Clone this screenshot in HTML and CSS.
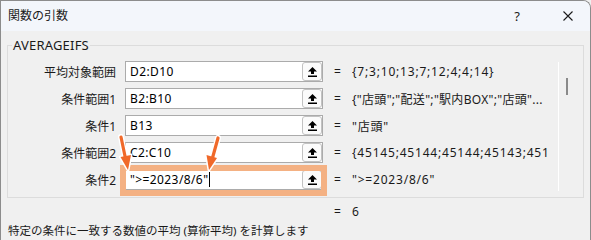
FILE: index.html
```html
<!DOCTYPE html>
<html lang="ja">
<head>
<meta charset="utf-8">
<title>関数の引数</title>
<link rel="stylesheet" href="styles.css">
</head>
<body>
<div class="win">
  <div class="titlebar">
    <span class="title">関数の引数</span>
    <span class="help">?</span>
    <span class="close"><svg width="10" height="10" viewBox="0 0 10 10"><path d="M0.5 0.5 L9.5 9.5 M9.5 0.5 L0.5 9.5" stroke="#1a1a1a" stroke-width="1.1" fill="none"/></svg></span>
  </div>
  <div class="content">
    <fieldset class="group">
      <legend>AVERAGEIFS</legend>
      <div class="rows-wrap">
        <div class="rows">
          <div class="row">
            <span class="lbl">平均対象範囲</span>
            <span class="ref"><span class="txt">D2:D10</span><span class="btn"><svg width="9" height="10" viewBox="0 0 9 10"><path d="M4.5 0 L9 4.5 L6 4.5 L6 7 L3 7 L3 4.5 L0 4.5 Z" fill="#000"/><rect x="0" y="8.5" width="9" height="1.5" fill="#000"/></svg></span></span>
            <span class="eq">=</span>
            <span class="val">{7;3;10;13;7;12;4;4;14}</span>
          </div>
          <div class="row">
            <span class="lbl">条件範囲1</span>
            <span class="ref"><span class="txt">B2:B10</span><span class="btn"><svg width="9" height="10" viewBox="0 0 9 10"><path d="M4.5 0 L9 4.5 L6 4.5 L6 7 L3 7 L3 4.5 L0 4.5 Z" fill="#000"/><rect x="0" y="8.5" width="9" height="1.5" fill="#000"/></svg></span></span>
            <span class="eq">=</span>
            <span class="val val-cjk">{"店頭";"配送";"駅内BOX";"店頭"...</span>
          </div>
          <div class="row">
            <span class="lbl">条件1</span>
            <span class="ref"><span class="txt">B13</span><span class="btn"><svg width="9" height="10" viewBox="0 0 9 10"><path d="M4.5 0 L9 4.5 L6 4.5 L6 7 L3 7 L3 4.5 L0 4.5 Z" fill="#000"/><rect x="0" y="8.5" width="9" height="1.5" fill="#000"/></svg></span></span>
            <span class="eq">=</span>
            <span class="val">"店頭"</span>
          </div>
          <div class="row">
            <span class="lbl">条件範囲2</span>
            <span class="ref"><span class="txt">C2:C10</span><span class="btn"><svg width="9" height="10" viewBox="0 0 9 10"><path d="M4.5 0 L9 4.5 L6 4.5 L6 7 L3 7 L3 4.5 L0 4.5 Z" fill="#000"/><rect x="0" y="8.5" width="9" height="1.5" fill="#000"/></svg></span></span>
            <span class="eq">=</span>
            <span class="val">{45145;45144;45144;45143;45148;45145;45146}</span>
          </div>
          <div class="row">
            <span class="lbl">条件2</span>
            <span class="ref"><span class="txt">"&gt;=2023/8/6"</span><span class="caret"></span><span class="btn"><svg width="9" height="10" viewBox="0 0 9 10"><path d="M4.5 0 L9 4.5 L6 4.5 L6 7 L3 7 L3 4.5 L0 4.5 Z" fill="#000"/><rect x="0" y="8.5" width="9" height="1.5" fill="#000"/></svg></span></span>
            <span class="eq">=</span>
            <span class="val">"&gt;=2023/8/6"</span>
          </div>
        </div>
        <div class="scroll"><div class="thumb"></div></div>
      </div>
    </fieldset>
    <div class="result"><span class="eq">=</span><span class="rval">6</span></div>
    <div class="desc">特定の条件に一致する数値の平均 (算術平均) を計算します</div>
  </div>
  <svg class="annot" width="591" height="240" viewBox="0 0 591 240">
    <rect x="123" y="168" width="201" height="25" fill="none" stroke="#f4b183" stroke-width="6"/>
    <g stroke-linecap="round" stroke-linejoin="round">
      <line x1="121" y1="137" x2="125.6" y2="159" stroke="#fff" stroke-width="6"/>
      <polygon points="128,170 120.5,157 131,155" fill="#fff" stroke="#fff" stroke-width="3"/>
      <line x1="121" y1="137" x2="125.6" y2="159" stroke="#f0692a" stroke-width="3.2"/>
      <polygon points="128,170 120.5,157 131,155" fill="#f0692a"/>
      <line x1="218" y1="138" x2="212.2" y2="159" stroke="#fff" stroke-width="6"/>
      <polygon points="209,170 206.5,155 217,158" fill="#fff" stroke="#fff" stroke-width="3"/>
      <line x1="218" y1="138" x2="212.2" y2="159" stroke="#f0692a" stroke-width="3.2"/>
      <polygon points="209,170 206.5,155 217,158" fill="#f0692a"/>
    </g>
  </svg>
</div>
</body>
</html>
```

FILE: styles.css
```css
html, body {
  margin: 0;
  padding: 0;
  background: #f0f0f0;
}
body {
  width: 591px;
  height: 240px;
  overflow: hidden;
  font-family: "Noto Sans", "Noto Sans CJK JP", sans-serif;
  font-size: 12px;
  color: #1a1a1a;
}
.win {
  position: relative;
  width: 591px;
  height: 240px;
  box-sizing: border-box;
  border: 1px solid #8c8c8c;
  border-bottom: none;
  border-top-right-radius: 8px;
  background: #f0f0f0;
  overflow: hidden;
}
.titlebar {
  height: 30px;
  display: flex;
  align-items: center;
  background: #f3f6fb;
}
.title {
  flex: 1;
  padding-left: 7px;
  line-height: 16px;
}
.help {
  width: 30px;
  text-align: center;
  font-size: 13px;
  margin-right: 14px;
}
.close {
  width: 44px;
  display: flex;
  justify-content: center;
  align-items: center;
}
.content {
  padding-left: 6px;
}
.group {
  margin: 6px 0 0 0;
  padding: 0 0 6px 0;
  width: 577px;
  box-sizing: border-box;
  border: 1px solid #dcdcdc;
  min-width: 0;
}
.group legend {
  margin-left: 4px;
  padding: 0 1px;
  line-height: 16px;
  font-size: 13px;
  letter-spacing: 0.2px;
}
.rows-wrap {
  display: flex;
  padding-top: 8px;
}
.rows {
  display: flex;
  flex-direction: column;
  gap: 6px;
}
.row {
  display: flex;
  align-items: center;
  height: 21px;
}
.lbl {
  width: 108px;
  margin-right: 9px;
  text-align: right;
  white-space: nowrap;
}
.ref {
  width: 198px;
  height: 21px;
  box-sizing: border-box;
  border: 1px solid #ababab;
  background: #fff;
  display: flex;
  align-items: center;
  padding-left: 4px;
}
.txt {
  white-space: nowrap;
  color: #000;
  letter-spacing: 0.4px;
}
.caret {
  width: 1px;
  height: 15px;
  background: #000;
  margin-left: 1px;
}
.btn {
  margin-left: auto;
  width: 20px;
  height: 19px;
  box-sizing: border-box;
  border: 1px solid #c2c2c2;
  border-radius: 3px;
  background: #fbfbfb;
  display: flex;
  align-items: center;
  justify-content: center;
}
.eq {
  width: 29px;
  box-sizing: border-box;
  padding-left: 11px;
}
.val {
  width: 196px;
  white-space: nowrap;
  overflow: hidden;
  color: #1a1a1a;
  letter-spacing: 0.8px;
}
.val-cjk {
  letter-spacing: 0.3px;
}
.scroll {
  margin-left: 10px;
  margin-top: 1px;
  width: 24px;
  height: 129px;
  border-left: 1px solid #ffffff;
}
.thumb {
  margin-left: 7px;
  margin-top: 16px;
  width: 2px;
  height: 17px;
  background: #8a8a8a;
}
.result {
  margin-top: 6px;
  padding-left: 327px;
  display: flex;
  line-height: 16px;
}
.result .eq {
  width: 18px;
  padding-left: 0;
}
.desc {
  margin-top: 3px;
  line-height: 16px;
  font-size: 11.5px;
  white-space: nowrap;
  padding-left: 1px;
}
.annot {
  position: absolute;
  left: -1px;
  top: -1px;
  pointer-events: none;
}
```
